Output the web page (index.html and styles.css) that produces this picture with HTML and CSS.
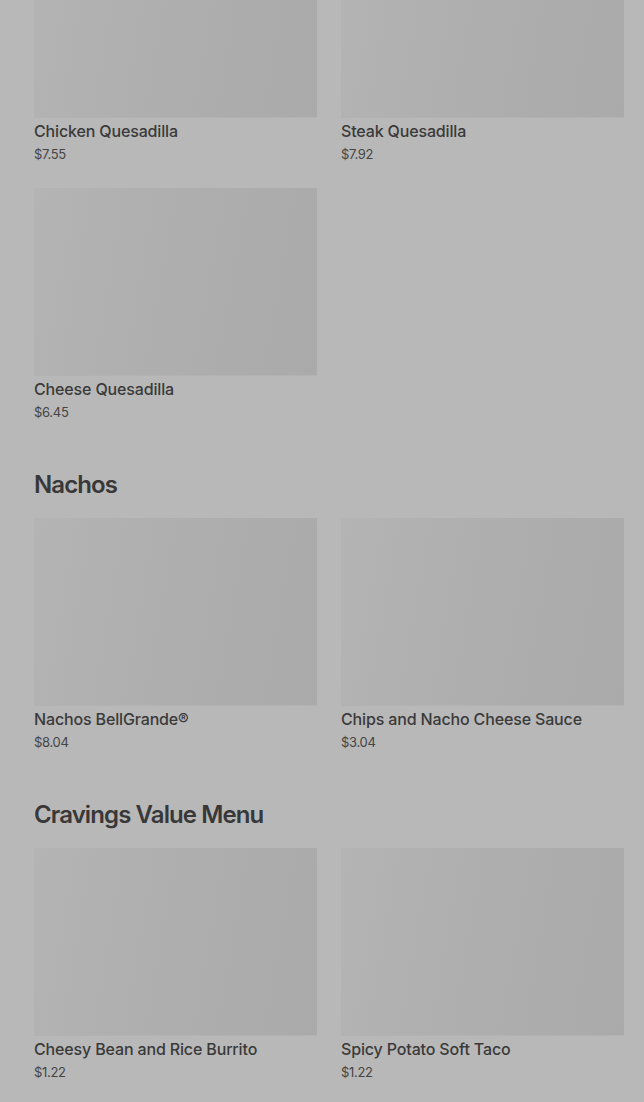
FILE: index.html
```html
<!DOCTYPE html>
<html lang="en">
<head>
    <meta charset="UTF-8">
    <meta name="viewport" content="width=device-width, initial-scale=1.0">
    <title>Menu</title>
    <link rel="stylesheet" href="styles.css">
</head>
<body>
    <div class="menu">
        <div class="item-grid first">
            <div class="item">
                <div class="item-img"></div>
                <div class="item-name">Chicken Quesadilla</div>
                <div class="item-price">$7.55</div>
            </div>
            <div class="item">
                <div class="item-img"></div>
                <div class="item-name">Steak Quesadilla</div>
                <div class="item-price">$7.92</div>
            </div>
            <div class="item">
                <div class="item-img"></div>
                <div class="item-name">Cheese Quesadilla</div>
                <div class="item-price">$6.45</div>
            </div>
        </div>

        <div class="section">
            <h2 class="section-title">Nachos</h2>
            <div class="item-grid">
                <div class="item">
                    <div class="item-img"></div>
                    <div class="item-name">Nachos BellGrande®</div>
                    <div class="item-price">$8.04</div>
                </div>
                <div class="item">
                    <div class="item-img"></div>
                    <div class="item-name">Chips and Nacho Cheese Sauce</div>
                    <div class="item-price">$3.04</div>
                </div>
            </div>
        </div>

        <div class="section">
            <h2 class="section-title">Cravings Value Menu</h2>
            <div class="item-grid">
                <div class="item">
                    <div class="item-img"></div>
                    <div class="item-name">Cheesy Bean and Rice Burrito</div>
                    <div class="item-price">$1.22</div>
                </div>
                <div class="item">
                    <div class="item-img"></div>
                    <div class="item-name">Spicy Potato Soft Taco</div>
                    <div class="item-price">$1.22</div>
                </div>
            </div>
        </div>
    </div>
</body>
</html>
```

FILE: styles.css
```css
* {
    margin: 0;
    padding: 0;
    box-sizing: border-box;
}

body {
    font-family: Inter, 'Noto Sans', sans-serif;
    background: #b8b8b8;
    color: #3b3b3b;
    overflow: hidden;
}

.menu {
    padding: 0 20px 0 34px;
}

.item-grid {
    display: grid;
    grid-template-columns: 1fr 1fr;
    column-gap: 24px;
    row-gap: 25px;
}

.item-grid.first {
    margin-top: -70px;
}

.item-img {
    height: 188px;
    background: linear-gradient(100deg, #b4b4b4 0%, #afafaf 40%, #aaaaaa 100%);
    border-bottom: 1px solid #b2b2b2;
}

.item-name {
    margin-top: 3px;
    font-size: 16px;
    line-height: 20px;
    font-weight: 500;
    color: #3a3a3a;
    letter-spacing: -0.15px;
}

.item-price {
    margin-top: 4px;
    font-size: 13px;
    line-height: 18px;
    color: #454545;
    letter-spacing: -0.3px;
}

.section {
    margin-top: 48px;
}

.section-title {
    font-size: 24px;
    line-height: 32px;
    font-weight: 600;
    letter-spacing: -0.9px;
    color: #383838;
    margin-bottom: 17px;
}
```
